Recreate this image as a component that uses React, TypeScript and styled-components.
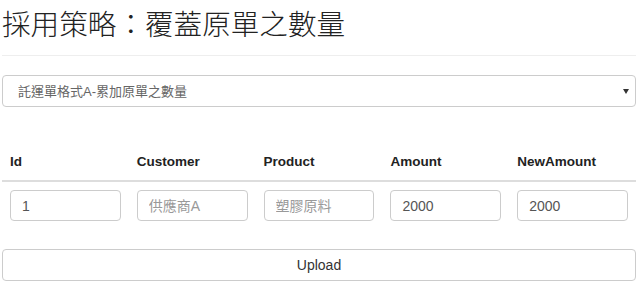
import styled, { createGlobalStyle } from "styled-components";

const rows = [
  { id: "1", customer: "", product: "", amount: "2000", newAmount: "2000" },
];

export default function App() {
  return (
    <>
      <GlobalStyle />
      <Page>
        <Title>採用策略：覆蓋原單之數量</Title>
        <Divider />

        <SelectWrap>
          <Select defaultValue="a">
            <option value="a">託運單格式A-累加原單之數量</option>
            <option value="b">託運單格式B-覆蓋原單之數量</option>
          </Select>
        </SelectWrap>

        <Table>
          <thead>
            <tr>
              <Th>Id</Th>
              <Th>Customer</Th>
              <Th>Product</Th>
              <Th>Amount</Th>
              <Th>NewAmount</Th>
            </tr>
          </thead>
          <tbody>
            {rows.map((row) => (
              <tr key={row.id}>
                <Td>
                  <Input defaultValue={row.id} />
                </Td>
                <Td>
                  <Input defaultValue={row.customer} placeholder="供應商A" />
                </Td>
                <Td>
                  <Input defaultValue={row.product} placeholder="塑膠原料" />
                </Td>
                <Td>
                  <Input defaultValue={row.amount} />
                </Td>
                <Td>
                  <Input defaultValue={row.newAmount} />
                </Td>
              </tr>
            ))}
          </tbody>
        </Table>

        <UploadButton type="button">Upload</UploadButton>
      </Page>
    </>
  );
}

const GlobalStyle = createGlobalStyle`
  body {
    margin: 0;
    background: #fff;
    font-family: "Liberation Sans", "Noto Sans CJK TC", Arial, sans-serif;
    color: #333;
  }
`;

const Page = styled.div`
  width: 634px;
  padding: 0 4px 0 2px;
`;

const Title = styled.h1`
  margin: 0;
  padding-top: 2px;
  font-family: "Noto Sans CJK TC", sans-serif;
  font-weight: 300;
  font-size: 28.6px;
  line-height: 42px;
  color: #222;
`;

const Divider = styled.hr`
  margin: 11px 0 0;
  border: 0;
  border-top: 1px solid #eee;
`;

const SelectWrap = styled.div`
  position: relative;
  margin-top: 19px;

  &::after {
    content: "";
    position: absolute;
    right: 7px;
    top: 14px;
    border-left: 3px solid transparent;
    border-right: 3px solid transparent;
    border-top: 5px solid #333;
    pointer-events: none;
  }
`;

const Select = styled.select`
  display: block;
  width: 100%;
  height: 32px;
  appearance: none;
  background: #fff;
  border: 1px solid #ccc;
  border-radius: 4px;
  padding: 0 15px;
  font-family: "Liberation Sans", "Noto Sans CJK TC", sans-serif;
  font-size: 13px;
  color: #666;
  outline: none;
`;

const Table = styled.table`
  width: 100%;
  margin-top: 37px;
  border-collapse: collapse;
  table-layout: fixed;
`;

const Th = styled.th`
  padding: 8px;
  text-align: left;
  font-family: "Liberation Sans", Arial, sans-serif;
  font-size: 13.5px;
  font-weight: bold;
  line-height: 20px;
  color: #222;
  border-bottom: 2px solid #ddd;
`;

const Td = styled.td`
  padding: 8px;
  vertical-align: top;
`;

const Input = styled.input`
  display: block;
  box-sizing: border-box;
  width: 100%;
  height: 31px;
  padding: 0 11px;
  border: 1px solid #ccc;
  border-radius: 4px;
  font-family: "Liberation Sans", "Noto Sans CJK TC", sans-serif;
  font-size: 14px;
  color: #555;
  outline: none;

  &::placeholder {
    color: #999;
  }
`;

const UploadButton = styled.button`
  display: block;
  width: 100%;
  height: 32px;
  margin-top: 20px;
  background: #fff;
  border: 1px solid #ccc;
  border-radius: 4px;
  font-family: "Liberation Sans", Arial, sans-serif;
  font-size: 14px;
  color: #333;
`;
